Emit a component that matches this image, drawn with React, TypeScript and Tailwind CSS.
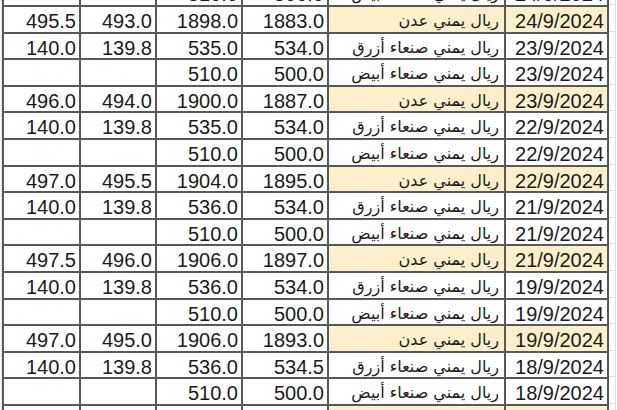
const AREA_ADEN = "ريال يمني عدن";
const AZRAQ = "ريال يمني صنعاء أزرق";
const ABYAD = "ريال يمني صنعاء أبيض";

type Row = { sell: string; buy: string; hi: string; lo: string; name: string; date: string };

const rows: Row[] = [
  { sell: "", buy: "", hi: "510.0", lo: "500.0", name: ABYAD, date: "24/9/2024" },
  { sell: "495.5", buy: "493.0", hi: "1898.0", lo: "1883.0", name: AREA_ADEN, date: "24/9/2024" },
  { sell: "140.0", buy: "139.8", hi: "535.0", lo: "534.0", name: AZRAQ, date: "23/9/2024" },
  { sell: "", buy: "", hi: "510.0", lo: "500.0", name: ABYAD, date: "23/9/2024" },
  { sell: "496.0", buy: "494.0", hi: "1900.0", lo: "1887.0", name: AREA_ADEN, date: "23/9/2024" },
  { sell: "140.0", buy: "139.8", hi: "535.0", lo: "534.0", name: AZRAQ, date: "22/9/2024" },
  { sell: "", buy: "", hi: "510.0", lo: "500.0", name: ABYAD, date: "22/9/2024" },
  { sell: "497.0", buy: "495.5", hi: "1904.0", lo: "1895.0", name: AREA_ADEN, date: "22/9/2024" },
  { sell: "140.0", buy: "139.8", hi: "536.0", lo: "534.0", name: AZRAQ, date: "21/9/2024" },
  { sell: "", buy: "", hi: "510.0", lo: "500.0", name: ABYAD, date: "21/9/2024" },
  { sell: "497.5", buy: "496.0", hi: "1906.0", lo: "1897.0", name: AREA_ADEN, date: "21/9/2024" },
  { sell: "140.0", buy: "139.8", hi: "536.0", lo: "534.0", name: AZRAQ, date: "19/9/2024" },
  { sell: "", buy: "", hi: "510.0", lo: "500.0", name: ABYAD, date: "19/9/2024" },
  { sell: "497.0", buy: "495.0", hi: "1906.0", lo: "1893.0", name: AREA_ADEN, date: "19/9/2024" },
  { sell: "140.0", buy: "139.8", hi: "536.0", lo: "534.5", name: AZRAQ, date: "18/9/2024" },
  { sell: "", buy: "", hi: "510.0", lo: "500.0", name: ABYAD, date: "18/9/2024" },
  { sell: "", buy: "", hi: "", lo: "", name: AREA_ADEN, date: "18/9/2024" },
];

const num = "bg-white text-right pr-[3px] pt-[3px] leading-[22px] text-[20px] text-[#1a1a1a] whitespace-nowrap overflow-hidden";

export default function App() {
  return (
    <div className="w-[617px] h-[410px] overflow-hidden bg-white flex" style={{ fontFamily: '"Liberation Sans", Arial, sans-serif' }}>
      {/* faint spreadsheet gridline on the left edge */}
      <div className="w-[2px] shrink-0 border-r border-dotted border-[#c8c8c8]" />

      <div className="mt-[-21.6px] shrink-0 grid grid-cols-[75px_74px_84px_84px_175px_101px] auto-rows-[24.6px] gap-[2px] p-[2px] bg-[#585858] h-max">
        {rows.map((r, i) => {
          const aden = r.name === AREA_ADEN;
          const tint = aden ? "bg-[#fcf0cc]" : "bg-white";
          return [
            <div key={`a${i}`} className={num}>{r.sell}</div>,
            <div key={`b${i}`} className={num}>{r.buy}</div>,
            <div key={`c${i}`} className={num}>{r.hi}</div>,
            <div key={`d${i}`} className={num}>{r.lo}</div>,
            <div
              key={`e${i}`}
              dir="rtl"
              className={`${tint} text-right pr-[5px] pt-[3px] leading-[22px] text-[16px] text-[#1a1a1a] whitespace-nowrap overflow-hidden`}
              style={{ fontFamily: '"DejaVu Sans", sans-serif' }}
            >
              {r.name}
            </div>,
            <div key={`f${i}`} className={`${tint} text-right pr-[3px] pt-[3px] leading-[22px] text-[20px] text-[#1a1a1a] whitespace-nowrap`}>
              {r.date}
            </div>,
          ];
        })}
      </div>

      {/* next empty spreadsheet column */}
      <div className="mt-[-21.6px] flex-1 flex flex-col">
        {rows.map((_, i) => (
          <div key={i} className="h-[26.6px] shrink-0 border-b border-r border-[#dcdcdc] mr-[1px]" />
        ))}
      </div>
    </div>
  );
}
